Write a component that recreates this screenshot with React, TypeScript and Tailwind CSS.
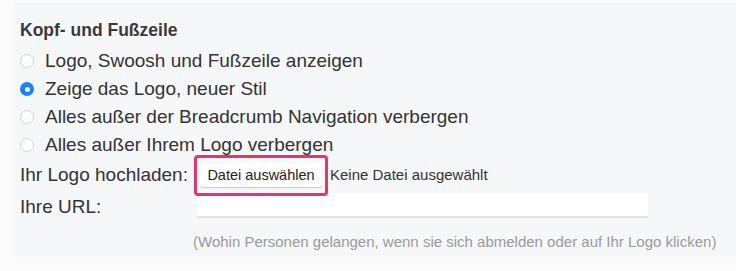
import React from "react";

const options = [
  "Logo, Swoosh und Fußzeile anzeigen",
  "Zeige das Logo, neuer Stil",
  "Alles außer der Breadcrumb Navigation verbergen",
  "Alles außer Ihrem Logo verbergen",
];

const Radio = ({ checked }: { checked: boolean }) =>
  checked ? (
    <span className="w-[14px] h-[14px] rounded-full bg-[#1a82fb] flex items-center justify-center shrink-0">
      <span className="w-[5px] h-[5px] rounded-full bg-white" />
    </span>
  ) : (
    <span className="w-[14px] h-[14px] rounded-full bg-white border border-[#d4d4d4] shrink-0" />
  );

const App = () => {
  return (
    <div className="w-[736px] h-[271px] bg-[#fbfbfb] pt-[3px] pl-[15px] font-['Liberation_Sans',Arial,sans-serif] text-[#333]">
      <div className="h-[254px] bg-[#f6f7f9] pl-[5px] pt-[17px]">
        {/* Kopf- und Fußzeile */}
        <h3 className="text-[17.5px] font-bold leading-[20px] text-[#3a3a3a]">Kopf- und Fußzeile</h3>

        <div className="mt-[7px] flex flex-col">
          {options.map((label, i) => (
            <label key={label} className="flex items-center gap-[11px] h-[28px] text-[19px]">
              <Radio checked={i === 1} />
              <span>{label}</span>
            </label>
          ))}
        </div>

        {/* Logo upload */}
        <div className="mt-[4px] flex items-center h-[24px]">
          <span className="text-[19px] w-[180px]">Ihr Logo hochladen:</span>
          <div className="relative">
            <button className="h-[24px] w-[122px] bg-white rounded-[3px] shadow-[0_1px_1px_rgba(0,0,0,0.18)] text-[14.5px] text-[#222]">
              Datei auswählen
            </button>
            <span className="absolute left-[-6px] right-[-6px] top-[-8px] bottom-[-9px] border-[3px] border-[#e8336e] rounded-[4px] pointer-events-none" />
          </div>
          <span className="ml-[8px] text-[15px] text-[#333]">Keine Datei ausgewählt</span>
        </div>

        {/* URL */}
        <div className="mt-[6px] flex items-start">
          <span className="text-[19px] w-[177px] leading-[28px]">Ihre URL:</span>
          <div className="w-[451px] h-[25px] bg-white border-b-2 border-[#e2e2e2]" />
        </div>

        <p className="mt-[12px] ml-[173px] text-[15px] leading-[18px] text-[#9a9a9a]">
          (Wohin Personen gelangen, wenn sie sich abmelden oder auf Ihr Logo klicken)
        </p>
      </div>
    </div>
  );
};

export default App;
